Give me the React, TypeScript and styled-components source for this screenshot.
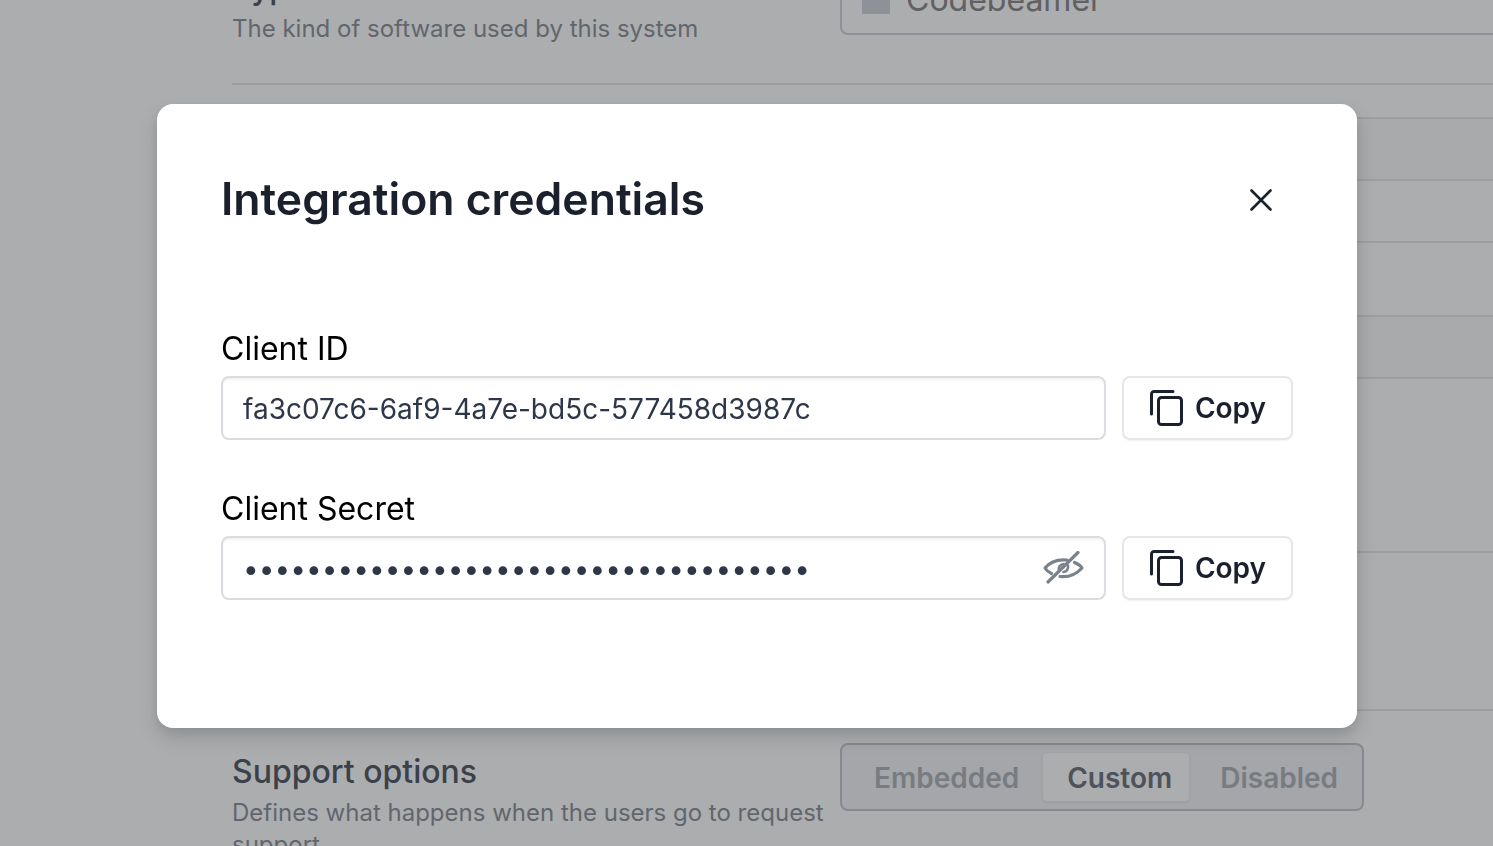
import React from "react";
import styled, { createGlobalStyle } from "styled-components";

const GlobalStyle = createGlobalStyle`
  * { box-sizing: border-box; }
  html, body { margin: 0; height: 100%; overflow: hidden; background: #fff; }
  body { font-family: Inter, "Liberation Sans", sans-serif; }
`;

const Page = styled.div`
  height: 846px;
  overflow: hidden;
  background: #fff;
`;

// page is scrolled, so the first row starts above the window
const Content = styled.div`
  margin-top: -32px;
  padding-left: 232px;
  width: 1700px;
`;

const SettingRow = styled.section`
  display: grid;
  grid-template-columns: 608px 1fr;
  padding-bottom: 38px;
`;

const Divider = styled.hr`
  margin: 0 0 32px;
  border: 0;
  border-top: 2px solid #e5e7eb;
`;

const SettingText = styled.div<{ $inset?: boolean }>`
  padding-top: ${(p) => (p.$inset ? "9px" : "0")};
`;

const SettingTitle = styled.h3`
  margin: 0 0 5px;
  font-size: 32px;
  line-height: 40px;
  font-weight: 500;
  color: #525a66;
`;

const SettingHint = styled.p`
  margin: 0;
  font-size: 24px;
  line-height: 32px;
  color: #8d939c;
  width: 600px;
`;

const SelectBox = styled.div`
  display: flex;
  align-items: center;
  gap: 16px;
  height: 71px;
  margin-top: -4px;
  padding-left: 20px;
  border: 2px solid #d1d5db;
  border-radius: 8px;
  font-size: 32px;
  color: #8a8a8a;
`;

const Swatch = styled.span`
  width: 28px;
  height: 28px;
  background: #d1d5db;
`;

const Table = styled.div`
  margin-bottom: 32px;
  border-top: 2px solid #e5e7eb;
`;

const TableRow = styled.div<{ $h: number; $shaded?: boolean }>`
  height: ${(p) => p.$h}px;
  border-bottom: 2px solid #e5e7eb;
  background: ${(p) => (p.$shaded ? "#f9fafb" : "#fff")};
`;

const Segmented = styled.div`
  display: inline-flex;
  align-self: start;
  justify-self: start;
  padding: 8px;
  border: 2px solid #c4c8cf;
  border-radius: 8px;
  background: #f3f4f6;
`;

const Segment = styled.span<{ $active?: boolean; $pad: string }>`
  padding: ${(p) => p.$pad};
  height: 48px;
  line-height: 50px;
  font-size: 28px;
  font-weight: 600;
  border-radius: 4px;
  color: ${(p) => (p.$active ? "#6f757e" : "#b0b4bb")};
  background: ${(p) => (p.$active ? "#fff" : "transparent")};
  box-shadow: ${(p) => (p.$active ? "0 1px 3px rgba(0, 0, 0, 0.08)" : "none")};
`;

const Overlay = styled.div`
  position: fixed;
  inset: 0;
  display: flex;
  align-items: flex-start;
  padding: 104px 0 0 157px;
  background: rgba(18, 20, 25, 0.35);
`;

const Modal = styled.div`
  width: 1200px;
  height: 624px;
  padding: 66px 64px 64px;
  background: #fff;
  border-radius: 16px;
  box-shadow: 0 10px 20px rgba(0, 0, 0, 0.14), 0 4px 8px rgba(0, 0, 0, 0.06);
`;

const ModalHeader = styled.header`
  display: flex;
  align-items: center;
  justify-content: space-between;
  height: 58px;
  margin-bottom: 100px;
`;

const ModalTitle = styled.h2`
  margin: 0;
  font-size: 44.5px;
  line-height: 56px;
  font-weight: 600;
  color: #1a202c;
`;

const CloseButton = styled.button`
  display: flex;
  align-items: center;
  justify-content: center;
  width: 64px;
  height: 58px;
  margin-top: 2px;
  padding: 0;
  border: 0;
  background: none;
  color: #1a202c;
`;

const Fields = styled.div`
  display: flex;
  flex-direction: column;
  gap: 48px;
`;

const FieldLabel = styled.label`
  display: block;
  margin-bottom: 6px;
  font-size: 32px;
  line-height: 42px;
  color: #000;
`;

const FieldRow = styled.div`
  display: flex;
  gap: 16px;
`;

const InputWrap = styled.div`
  position: relative;
  flex: 1;
`;

const ValueInput = styled.input`
  display: block;
  width: 100%;
  height: 64px;
  padding: 2px 20px 0;
  border: 2px solid #d9dce1;
  border-radius: 8px;
  box-shadow: inset 0 2px 2px rgba(0, 0, 0, 0.05);
  outline: none;
  font-family: inherit;
  font-size: 28px;
  color: #2d3748;
  background: #fff;
`;

const EyeToggle = styled.span`
  position: absolute;
  right: 22px;
  top: 15px;
  display: flex;
  color: #7a828d;
`;

const CopyButton = styled.button`
  display: flex;
  align-items: center;
  justify-content: center;
  gap: 12px;
  width: 171px;
  height: 64px;
  padding: 0 0 0 1px;
  border: 2px solid #e5e7eb;
  border-radius: 8px;
  background: #fff;
  box-shadow: 0 1px 2px rgba(0, 0, 0, 0.05);
  font-family: inherit;
  font-size: 28px;
  font-weight: 600;
  color: #1a202c;
`;

const CloseIcon = () => (
  <svg width="24" height="24" viewBox="0 0 24 24" fill="none" stroke="currentColor" strokeWidth="2.6" strokeLinecap="round">
    <path d="M2.5 2.5 21.5 21.5M21.5 2.5 2.5 21.5" />
  </svg>
);

const CopyIcon = () => (
  <svg width="33" height="36" viewBox="0 0 33 36" fill="none" stroke="currentColor" strokeWidth="3" strokeLinecap="round" strokeLinejoin="round">
    <path d="M1.500 24V4a2.500 2.500 0 0 1 2.500-2.500h19" />
    <rect x="8.500" y="7.500" width="23" height="27" rx="3" />
  </svg>
);

const EyeOffIcon = () => (
  <svg width="41" height="33" viewBox="0 0 41 33" fill="none" stroke="currentColor" strokeWidth="3.2" strokeLinecap="round" strokeLinejoin="round">
    <path d="M5 31 35 1.500" />
    <path d="M24 9C14.500 8 6.500 11.500 2 17c1.500 2.500 4 4.500 6.500 5.500" />
    <path d="M31.500 11.500c3.500 1.500 6 3 7.500 5.500-6 6.500-13.500 9.500-22 8.500" />
    <path d="M16 19.500c-1-3 1-6 4.500-6.500" strokeWidth="2.6" />
    <path d="M25 14.500c.5 3-1 6-4.500 6.500" strokeWidth="2.6" />
  </svg>
);

const CLIENT_ID = "fa3c07c6-6af9-4a7e-bd5c-577458d3987c";
const CLIENT_SECRET = "x".repeat(36);

export default function App() {
  return (
    <>
      <GlobalStyle />
      <Page>
        <Content>
          <SettingRow>
            <SettingText>
              <SettingTitle>Type</SettingTitle>
              <SettingHint>The kind of software used by this system</SettingHint>
            </SettingText>
            <SelectBox>
              <Swatch />
              Codebeamer
            </SelectBox>
          </SettingRow>
          <Divider />
          <Table>
            <TableRow $h={62} $shaded />
            <TableRow $h={62} />
            <TableRow $h={74} />
            <TableRow $h={62} $shaded />
            <TableRow $h={174} />
            <TableRow $h={158} />
          </Table>
          <SettingRow>
            <SettingText $inset>
              <SettingTitle>Support options</SettingTitle>
              <SettingHint>Defines what happens when the users go to request support</SettingHint>
            </SettingText>
            <Segmented>
              <Segment $pad="0 24px">Embedded</Segment>
              <Segment $active $pad="0 17px 0 24px">Custom</Segment>
              <Segment $pad="0 16px 0 31px">Disabled</Segment>
            </Segmented>
          </SettingRow>
        </Content>
      </Page>
      <Overlay>
        <Modal role="dialog">
          <ModalHeader>
            <ModalTitle>Integration credentials</ModalTitle>
            <CloseButton aria-label="Close">
              <CloseIcon />
            </CloseButton>
          </ModalHeader>
          <Fields>
            <div>
              <FieldLabel>Client ID</FieldLabel>
              <FieldRow>
                <InputWrap>
                  <ValueInput readOnly value={CLIENT_ID} />
                </InputWrap>
                <CopyButton>
                  <CopyIcon />
                  Copy
                </CopyButton>
              </FieldRow>
            </div>
            <div>
              <FieldLabel>Client Secret</FieldLabel>
              <FieldRow>
                <InputWrap>
                  <ValueInput readOnly type="password" value={CLIENT_SECRET} />
                  <EyeToggle>
                    <EyeOffIcon />
                  </EyeToggle>
                </InputWrap>
                <CopyButton>
                  <CopyIcon />
                  Copy
                </CopyButton>
              </FieldRow>
            </div>
          </Fields>
        </Modal>
      </Overlay>
    </>
  );
}
